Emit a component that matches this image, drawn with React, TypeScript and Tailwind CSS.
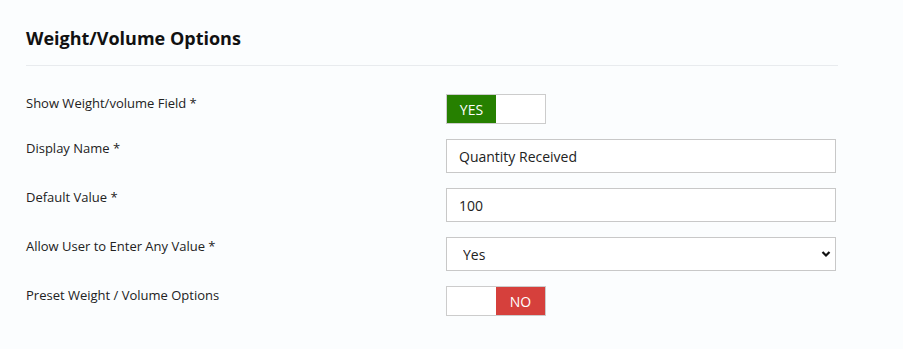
function Toggle({ on }: { on: boolean }) {
  return (
    <div className="flex h-[30px] w-[100px] border border-[#cccccc] bg-white">
      {on ? (
        <>
          <div className="flex w-[49px] items-center justify-center bg-[#268000] text-[14px] text-white">YES</div>
          <div className="flex-1" />
        </>
      ) : (
        <>
          <div className="w-[49px]" />
          <div className="flex flex-1 items-center justify-center bg-[#d6403c] text-[14px] text-white">NO</div>
        </>
      )}
    </div>
  );
}

function Row({ label, children }: { label: string; children: React.ReactNode }) {
  return (
    <div className="flex">
      <div className="w-[420px] text-[13px] leading-[19px] text-[#222]">{label}</div>
      <div className="w-[390px]">{children}</div>
    </div>
  );
}

export default function App() {
  return (
    <div
      className="min-h-[349px] bg-[#fbfdfe] pl-[26px] pt-[26px]"
      style={{ fontFamily: '"Open Sans", "Noto Sans", sans-serif' }}
    >
      <div className="w-[812px]">
        <h2 className="text-[18px] font-bold leading-[24px] text-[#111]">Weight/Volume Options</h2>
        <div className="mt-[15px] h-px bg-[#e8ebee]" />

        <div className="mt-[28px] flex flex-col gap-[15px]">
          <Row label="Show Weight/volume Field *">
            <Toggle on />
          </Row>
          <Row label="Display Name *">
            <input
              readOnly
              value="Quantity Received"
              className="h-[34px] w-full border border-[#c8c8c8] bg-white px-[12px] text-[14px] text-[#222] outline-none"
            />
          </Row>
          <Row label="Default Value *">
            <input
              readOnly
              value="100"
              className="h-[34px] w-full border border-[#c8c8c8] bg-white px-[12px] text-[14px] text-[#222] outline-none"
            />
          </Row>
          <Row label="Allow User to Enter Any Value *">
            <div className="relative">
              <select
                defaultValue="Yes"
                className="h-[34px] w-full appearance-none border border-[#c8c8c8] bg-white pl-[16px] text-[14px] text-[#222] outline-none"
              >
                <option>Yes</option>
                <option>No</option>
              </select>
              <svg
                className="pointer-events-none absolute right-[5px] top-[13px]"
                width="10"
                height="8"
                viewBox="0 0 10 8"
              >
                <path d="M1.5 2 L5 5.5 L8.5 2" fill="none" stroke="#111" strokeWidth="2.2" />
              </svg>
            </div>
          </Row>
          <Row label="Preset Weight / Volume Options">
            <Toggle on={false} />
          </Row>
        </div>
      </div>
    </div>
  );
}
